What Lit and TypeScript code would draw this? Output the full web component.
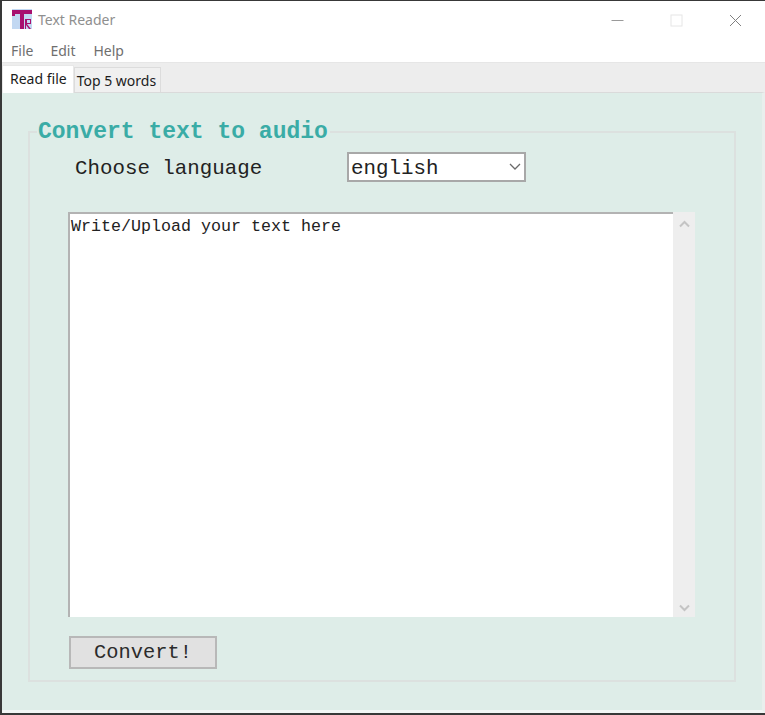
import { html, css, LitElement } from "lit";
import { customElement, state } from "lit/decorators.js";

const MONO = css`"Liberation Mono", "Courier New", monospace`;

@customElement("app-root")
export class AppRoot extends LitElement {
  static styles = css`
    :host {
      display: block;
      width: 765px;
      height: 715px;
      overflow: hidden;
      background: #383838;
      font-family: "Noto Sans", "Open Sans", sans-serif;
    }

    .window {
      margin: 1px 0 0 2px;
      width: 763px;
      height: 712px;
      display: flex;
      flex-direction: column;
      background: #fff;
    }

    .titlebar {
      height: 38px;
      box-sizing: border-box;
      padding: 0 0 2px 10px;
      display: flex;
      align-items: center;
      color: #8f8f8f;
      font-size: 14px;
    }
    .logo {
      width: 20px;
      height: 20px;
      margin-right: 6px;
    }
    .title {
      flex: 1;
    }
    .controls {
      display: flex;
      align-items: center;
      margin-top: 2px;
    }
    .controls svg {
      display: block;
      width: 13px;
      height: 13px;
    }
    .ctl {
      width: 59px;
      display: flex;
      justify-content: center;
    }

    .menu {
      height: 23px;
      display: flex;
      align-items: center;
      gap: 17px;
      padding-left: 9px;
      font-size: 14px;
      color: #6f6f6f;
    }
    .menu span:last-child {
      margin-left: 1px;
    }

    .tabs {
      height: 30px;
      background: #ededed;
      border-top: 1px solid #e6e6e6;
      box-sizing: border-box;
      display: flex;
      align-items: flex-end;
      font-size: 14px;
      color: #1c1c1c;
    }
    .tab {
      cursor: default;
      box-sizing: border-box;
      height: 25px;
      padding: 0 4px 0 2px;
      line-height: 26px;
      background: #f0f0f0;
      border: 1px solid #dcdcdc;
      border-bottom: none;
    }
    .tab.active {
      height: 28px;
      padding: 0 6px 0 7px;
      line-height: 26px;
      background: #fff;
      border-color: #e8e8e8;
      margin-bottom: -1px;
      position: relative;
    }

    .panel {
      flex: 1;
      background: #deede8;
      border-top: 1px solid #dadada;
      border-right: 3px solid #e9efed;
      border-bottom: 3px solid #f2f6f5;
      padding: 26px 26px 28px 26px;
      display: flex;
      flex-direction: column;
    }

    fieldset {
      flex: 1;
      margin: 0;
      min-width: 0;
      border: 2px solid #dce1df;
      padding: 0 0 0 39px;
      display: flex;
      flex-direction: column;
      align-items: flex-start;
    }
    legend {
      margin-left: -32px;
      padding: 0 2px 0 1px;
      font: bold 23px/26px ${MONO};
      color: #3aaca6;
    }

    .lang {
      display: flex;
      align-items: center;
      height: 30px;
      margin-top: 7px;
      margin-left: 6px;
      font: 20.8px ${MONO};
      color: #222;
    }
    .lang-label {
      width: 272px;
      padding-top: 2px;
    }
    select {
      appearance: none;
      width: 179px;
      height: 30px;
      box-sizing: border-box;
      margin: 0;
      padding: 2px 0 0 2px;
      border: 2px solid #a8a8a8;
      border-radius: 0;
      background: #fff;
      font: 20.8px ${MONO};
      color: #222;
      outline: none;
    }
    .select-wrap {
      position: relative;
      display: flex;
    }
    .chev {
      position: absolute;
      right: 5px;
      top: 11px;
      width: 12px;
      height: 8px;
      pointer-events: none;
    }

    .editor {
      display: flex;
      margin-top: 30px;
      margin-left: -1px;
      height: 405px;
    }
    textarea {
      width: 605px;
      height: 405px;
      box-sizing: border-box;
      margin: 0;
      padding: 3px 0 0 1px;
      border: none;
      border-top: 2px solid #b3b3b3;
      border-left: 2px solid #b3b3b3;
      border-radius: 0;
      background: #fff;
      font: 16.67px/20px ${MONO};
      color: #222;
      resize: none;
      outline: none;
      overflow: hidden;
    }
    .scroll {
      width: 22px;
      background: #eeeeee;
      display: flex;
      flex-direction: column;
      justify-content: space-between;
      align-items: center;
      padding: 8px 0 5px;
      box-sizing: border-box;
    }
    .scroll svg {
      display: block;
      width: 11px;
      height: 8px;
    }

    button {
      margin-top: 19px;
      width: 148px;
      height: 33px;
      box-sizing: border-box;
      border: 2px solid #b8b8b8;
      border-radius: 0;
      background: #e1e1e1;
      padding: 0;
      font: 20.4px ${MONO};
      color: #2b2b2b;
    }
  `;

  @state() private tab = 0;

  render() {
    return html`
      <div class="window">
        <div class="titlebar">
          <svg class="logo" viewBox="0 0 20 20">
            <rect width="20" height="20" fill="#c2d8f2" />
            <path d="M0 1h20v4H12v15H8V5H3v2H0z" fill="#a8106f" />
            <path d="M13 10h6v5h-4l4 5h-2l-3-4v4h-1zM15 11v3h3v-3z" fill="#a8106f" fill-rule="evenodd" />
          </svg>
          <span class="title">Text Reader</span>
          <div class="controls">
            <div class="ctl">
              <svg viewBox="0 0 13 13"><path d="M0.500 6.500h12" stroke="#9a9a9a" fill="none" /></svg>
            </div>
            <div class="ctl">
              <svg viewBox="0 0 13 13"><rect x="1" y="1" width="11" height="11" stroke="#e6e6e6" fill="none" /></svg>
            </div>
            <div class="ctl">
              <svg viewBox="0 0 13 13"><path d="M1 1l11 11M12 1L1 12" stroke="#808080" fill="none" /></svg>
            </div>
          </div>
        </div>
        <div class="menu"><span>File</span><span>Edit</span><span>Help</span></div>
        <div class="tabs">
          ${["Read file", "Top 5 words"].map(
            (t, i) => html`<div class="tab ${this.tab === i ? "active" : ""}" @click=${() => (this.tab = i)}>${t}</div>`
          )}
        </div>
        <div class="panel">
          <fieldset>
            <legend>Convert text to audio</legend>
            <div class="lang">
              <span class="lang-label">Choose language</span>
              <div class="select-wrap">
                <select>
                  <option>english</option>
                </select>
                <svg class="chev" viewBox="0 0 12 8"><path d="M1 1l5 5 5-5" fill="none" stroke="#6a6a6a" stroke-width="1.300" /></svg>
              </div>
            </div>
            <div class="editor">
              <textarea spellcheck="false" .value=${"Write/Upload your text here"}></textarea>
              <div class="scroll">
                <svg viewBox="0 0 11 8"><path d="M1 6.500l4.500-4.500 4.500 4.500" fill="none" stroke="#c4c4c4" stroke-width="2" /></svg>
                <svg viewBox="0 0 11 8"><path d="M1 1.500l4.500 4.500 4.500-4.500" fill="none" stroke="#c4c4c4" stroke-width="2" /></svg>
              </div>
            </div>
            <button>Convert!</button>
          </fieldset>
        </div>
      </div>
    `;
  }
}
